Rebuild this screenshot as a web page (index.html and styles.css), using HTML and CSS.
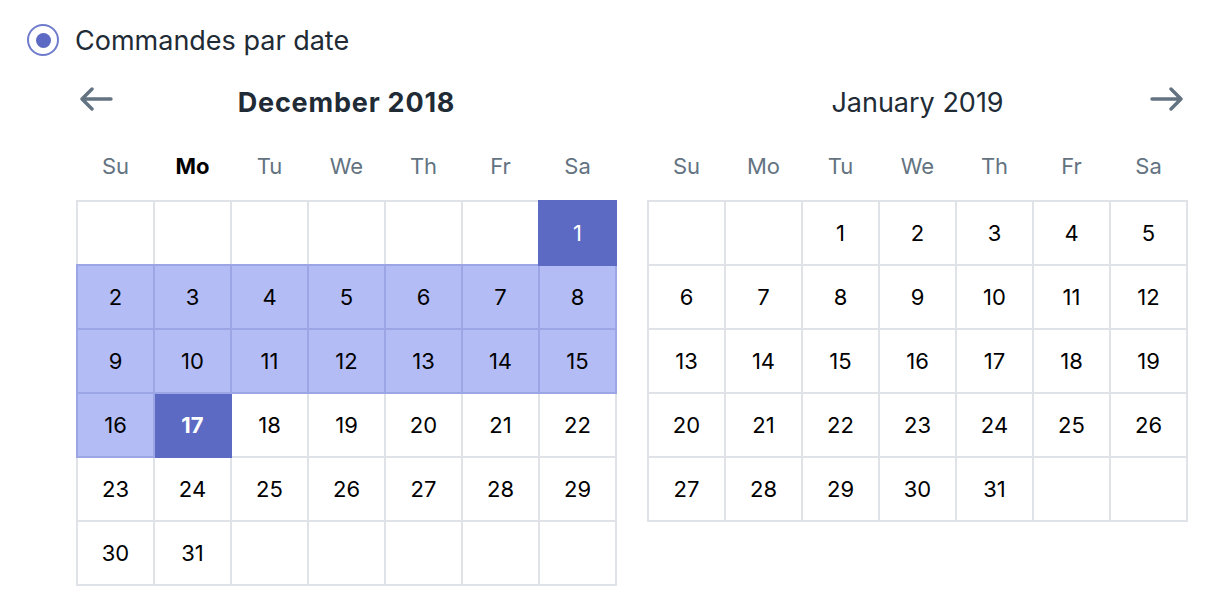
FILE: index.html
```html
<!DOCTYPE html>
<html>
<head>
<meta charset="utf-8">
<link rel="stylesheet" href="styles.css">
</head>
<body>
<div class="option">
  <span class="radio"><span class="dot"></span></span>
  <span class="option-label">Commandes par date</span>
</div>
<div class="months">
  <div class="month">
    <div class="month-head">
      <svg class="nav nav-prev" width="34" height="24" viewBox="0 0 34 24"><path d="M32 12H3M13 2L3 12l10 10" fill="none" stroke="#637381" stroke-width="3.4" stroke-linecap="round" stroke-linejoin="round"/></svg>
      <div class="title bold">December 2018</div>
      <span></span>
    </div>
    <div class="weekdays">
      <span>Su</span><span class="today">Mo</span><span>Tu</span><span>We</span><span>Th</span><span>Fr</span><span>Sa</span>
    </div>
    <table class="grid">
      <tr><td class="empty"></td><td class="empty"></td><td class="empty"></td><td class="empty"></td><td class="empty"></td><td class="empty"></td><td class="sel">1</td></tr>
      <tr><td class="span">2</td><td class="span">3</td><td class="span">4</td><td class="span">5</td><td class="span">6</td><td class="span">7</td><td class="span">8</td></tr>
      <tr><td class="span">9</td><td class="span">10</td><td class="span">11</td><td class="span">12</td><td class="span">13</td><td class="span">14</td><td class="span">15</td></tr>
      <tr><td class="span">16</td><td class="sel bold">17</td><td>18</td><td>19</td><td>20</td><td>21</td><td>22</td></tr>
      <tr><td>23</td><td>24</td><td>25</td><td>26</td><td>27</td><td>28</td><td>29</td></tr>
      <tr><td>30</td><td>31</td><td class="empty"></td><td class="empty"></td><td class="empty"></td><td class="empty"></td><td class="empty"></td></tr>
    </table>
  </div>
  <div class="month">
    <div class="month-head">
      <span></span>
      <div class="title">January 2019</div>
      <svg class="nav nav-next" width="34" height="24" viewBox="0 0 34 24"><path d="M2 12h29M21 2l10 10-10 10" fill="none" stroke="#637381" stroke-width="3.4" stroke-linecap="round" stroke-linejoin="round"/></svg>
    </div>
    <div class="weekdays">
      <span>Su</span><span>Mo</span><span>Tu</span><span>We</span><span>Th</span><span>Fr</span><span>Sa</span>
    </div>
    <table class="grid">
      <tr><td class="empty"></td><td class="empty"></td><td>1</td><td>2</td><td>3</td><td>4</td><td>5</td></tr>
      <tr><td>6</td><td>7</td><td>8</td><td>9</td><td>10</td><td>11</td><td>12</td></tr>
      <tr><td>13</td><td>14</td><td>15</td><td>16</td><td>17</td><td>18</td><td>19</td></tr>
      <tr><td>20</td><td>21</td><td>22</td><td>23</td><td>24</td><td>25</td><td>26</td></tr>
      <tr><td>27</td><td>28</td><td>29</td><td>30</td><td>31</td><td class="empty"></td><td class="empty"></td></tr>
    </table>
  </div>
</div>
</body>
</html>
```
FILE: styles.css
```css
body {
  margin: 0;
  background: #fff;
  font-family: Inter, "Noto Sans", sans-serif;
  color: #212b36;
}
.option {
  display: flex;
  align-items: center;
  gap: 16px;
  padding: 24px 0 0 27px;
  height: 32px;
}
.radio {
  width: 28px;
  height: 28px;
  border: 2px solid #6f7bcc;
  border-radius: 50%;
  display: flex;
  align-items: center;
  justify-content: center;
}
.dot {
  width: 15px;
  height: 15px;
  border-radius: 50%;
  background: #5c6ac4;
}
.option-label {
  font-size: 27px;
  color: #212b36;
}
.months {
  display: flex;
  gap: 30px;
  margin-left: 76px;
  margin-top: 20px;
}
.month {
  width: 541px;
}
.month-head {
  display: grid;
  grid-template-columns: 1fr auto 1fr;
  align-items: center;
  height: 46px;
}
.title {
  font-size: 27px;
  color: #212b36;
  padding-top: 6px;
}
.title.bold {
  font-weight: 700;
  letter-spacing: 0.8px;
}
.bold {
  font-weight: 700;
}
.nav-prev {
  justify-self: start;
  margin-left: 3px;
}
.nav-next {
  justify-self: end;
  margin-right: 4px;
}
.weekdays {
  display: grid;
  grid-template-columns: repeat(7, 77px);
  padding-left: 1px;
  margin-top: 31px;
  height: 47px;
  font-size: 22px;
  color: #637381;
}
.weekdays span {
  text-align: center;
}
.weekdays .today {
  color: #000;
  font-weight: 700;
}
.grid {
  border-collapse: collapse;
}
.grid td {
  width: 75px;
  height: 62px;
  padding: 0;
  border: 2px solid #dfe3e8;
  text-align: center;
  vertical-align: middle;
  font-size: 22px;
  color: #000;
}
.grid td.span {
  background: #b3bcf5;
  border: 2px double #9ca6e5;
}
.grid td.sel {
  background: #5c6ac4;
  border: 2px double #5c6ac4;
  color: #fff;
}
```
